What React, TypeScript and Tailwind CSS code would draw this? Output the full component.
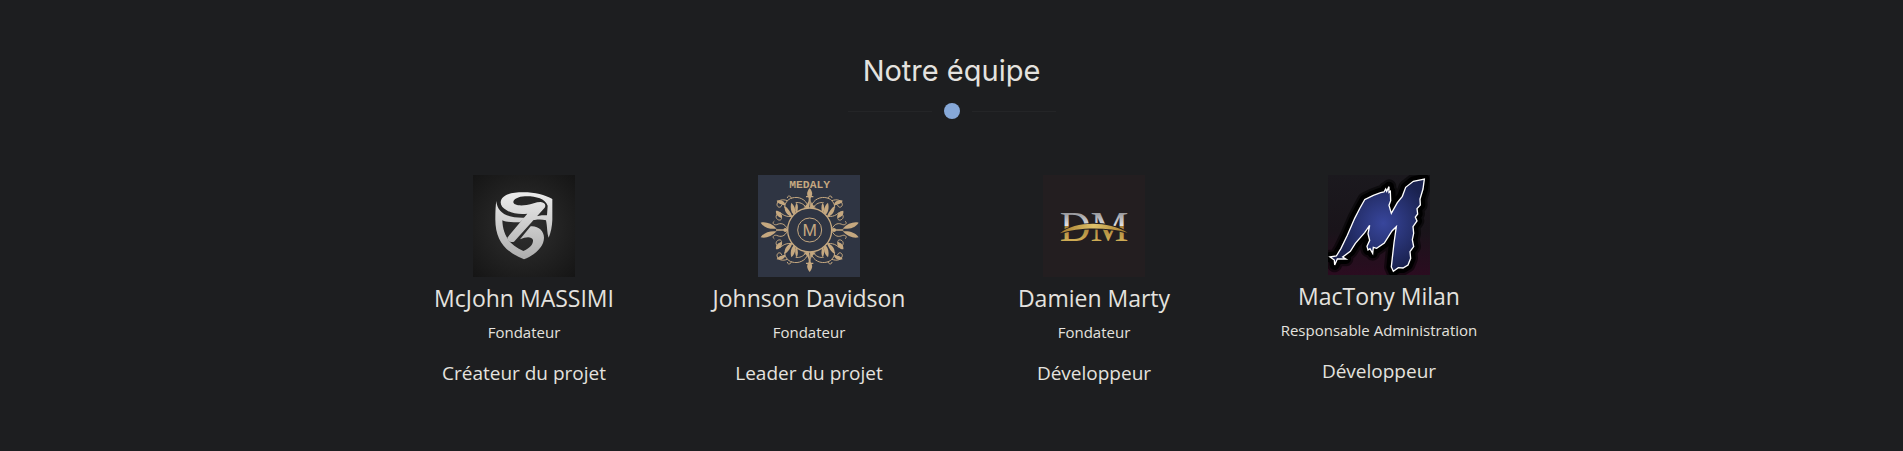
import React from "react";

const ShieldLogo = () => (
  <svg viewBox="24 15 306 306" className="h-[102px] w-[102px]" role="img" aria-label="McJohn MASSIMI">
    <defs>
      <radialGradient id="shield-bg" r="0.7">
        <stop offset="0" stopColor="#303030" />
        <stop offset="1" stopColor="#151515" />
      </radialGradient>
      <linearGradient id="steel" x1="0" y1="22" x2="0" y2="223" gradientUnits="userSpaceOnUse">
        <stop offset="0" stopColor="#ececec" />
        <stop offset="1" stopColor="#acacac" />
      </linearGradient>
    </defs>
    <rect x="24" y="15" width="306" height="306" fill="url(#shield-bg)" />
    <g fill="url(#steel)" transform="translate(15 45)">
      <path d="M92 52 C94 30 120 22 160 22 C195 22 225 30 247 42 L247 105 C246 125 243 142 236 158 C231 145 232 125 228 106 C212 102 195 104 180 108 L192 96 C205 91 220 90 231 91 L233 62 C225 40 195 33 165 34 C145 35 130 42 130 52 C132 61 150 63 170 60 C185 58 198 51 212 51 C224 52 229 60 224 68 L132 170 C124 174 113 168 112 158 L172 86 C150 88 125 86 110 76 C98 69 92 62 92 52 Z" />
      <path d="M79 48 C82 80 105 100 165 98 L150 112 C130 112 110 112 97 106 C98 145 115 180 160 198 C180 190 190 178 189 165 C185 154 168 155 150 163 L182 124 C205 122 222 138 222 158 C222 185 195 210 162 223 C105 200 75 165 76 100 C76 80 77 60 79 48 Z" />
    </g>
  </svg>
);

// One quarter of the flourish, mirrored around the medallion
const Flourish = () => (
  <g>
    <path
      d="M174 108 C168 88 146 78 126 84 C112 88 104 100 104 112 M168 112 C160 100 148 96 138 98 M112 92 C98 86 82 90 81 104 C82 114 94 114 95 106 M124 84 C122 76 112 76 112 83 M136 136 C118 144 100 138 92 128 M92 130 C76 128 74 146 86 150 C94 152 98 144 92 141 M112 176 C104 160 92 158 80 164 C70 166 66 158 72 154"
      fill="none"
      stroke="#c5a880"
      strokeWidth="3"
      strokeLinecap="round"
    />
    <path
      d="M80 92 C92 88 106 94 106 106 C96 104 84 102 80 92 Z M124 98 C136 108 138 124 136 138 C122 130 120 112 124 98 Z M140 98 C146 108 144 120 140 132 C134 120 134 108 140 98 Z M104 108 C114 114 122 126 128 142 C112 138 102 124 104 108 Z M32 158 C46 154 66 160 80 176 C62 178 42 174 32 158 Z M78 122 C90 122 98 132 96 144 C84 142 76 134 78 122 Z M177 84 C176 98 170 106 160 112 L178 116 Z"
      fill="#c5a880"
    />
  </g>
);

const MedalyLogo = () => (
  <svg viewBox="24 15 306 306" className="h-[102px] w-[102px]" role="img" aria-label="Johnson Davidson">
    <rect x="24" y="15" width="306" height="306" fill="#2f3543" />
    <text x="179" y="53" textAnchor="middle" fontFamily="Liberation Mono, monospace" fontWeight="700" fontSize="34" fill="#c5a880">
      MEDALY
    </text>
    <Flourish />
    <g transform="translate(358 0) scale(-1 1)">
      <Flourish />
    </g>
    <g transform="translate(0 360) scale(1 -1)">
      <Flourish />
    </g>
    <g transform="translate(358 360) scale(-1 -1)">
      <Flourish />
    </g>
    <g fill="#c5a880">
      <path d="M179 54 C188 65 189 74 182 84 L179 110 L176 84 C169 74 170 65 179 54 Z" />
      <path d="M179 306 C188 295 189 286 182 276 L179 250 L176 276 C169 286 170 295 179 306 Z" />
      <path d="M168 78 L190 78 L190 82 L168 82 Z M168 278 L190 278 L190 282 L168 282 Z" />
      <path d="M78 178 H114 V182 H78 Z M244 178 H280 V182 H244 Z" />
    </g>
    <circle cx="179" cy="180" r="66" fill="#2f3543" stroke="#c5a880" strokeWidth="4" />
    <circle cx="106" cy="180" r="6" fill="#c5a880" />
    <circle cx="252" cy="180" r="6" fill="#c5a880" />
    <circle cx="179" cy="180" r="36" fill="none" stroke="#c5a880" strokeWidth="3" />
    <text x="179" y="198" textAnchor="middle" fontFamily="Liberation Sans, sans-serif" fontSize="52" fill="#c5a880">
      M
    </text>
  </svg>
);

const DMLogo = () => (
  <svg viewBox="24 15 306 306" className="h-[102px] w-[102px]" role="img" aria-label="Damien Marty">
    <defs>
      <linearGradient id="dm-letters" x1="0" y1="122" x2="0" y2="213" gradientUnits="userSpaceOnUse">
        <stop offset="0" stopColor="#8b8c90" />
        <stop offset="0.5" stopColor="#e2e2e4" />
        <stop offset="0.52" stopColor="#a9843a" />
        <stop offset="1" stopColor="#d0ad55" />
      </linearGradient>
      <linearGradient id="dm-arc">
        <stop offset="0" stopColor="#a57b2b" />
        <stop offset="0.5" stopColor="#dfc26c" />
        <stop offset="1" stopColor="#a57b2b" />
      </linearGradient>
    </defs>
    <rect x="24" y="15" width="306" height="306" fill="#231e20" />
    <text x="177" y="212" textAnchor="middle" fontFamily="Liberation Serif, serif" fontSize="128" fill="url(#dm-letters)">
      DM
    </text>
    <path
      d="M75 190 C121 153 218 152 278 188 C218 171 129 171 75 190 Z"
      fill="url(#dm-arc)"
      stroke="#231e20"
      strokeWidth="6"
      paintOrder="stroke"
    />
  </svg>
);

const BrushLogo = () => (
  <svg viewBox="24 15 306 300" className="h-[100px] w-[102px]" role="img" aria-label="MacTony Milan">
    <defs>
      <linearGradient id="brush-bg" x1="0" y1="0" x2="0" y2="1">
        <stop offset="0" stopColor="#1b191e" />
        <stop offset="0.55" stopColor="#19141a" />
        <stop offset="1" stopColor="#2b0c20" />
      </linearGradient>
      <radialGradient id="brush-fill" cx="190" cy="160" r="140" gradientUnits="userSpaceOnUse">
        <stop offset="0" stopColor="#38469c" />
        <stop offset="1" stopColor="#1a2250" />
      </radialGradient>
      <path
        id="brush-m"
        d="M134 89 L160 76 L182 68 L192 66 L197 57 L200 64 L207 50 L207 67 L211 64 L212 92 L207 106 L214 130 L232 98 L247 79 L257 52 L280 34 L313 27 L309 57 L300 87 L301 105 L291 116 L293 132 L286 141 L291 153 L279 170 L281 190 L277 209 L281 230 L270 245 L272 265 L264 285 L249 294 L235 293 L220 304 L214 291 L217 263 L222 219 L229 170 L216 183 L193 219 L170 235 L160 232 L158 250 L150 236 L144 240 L141 229 L149 211 L144 191 L149 166 L134 188 L106 220 L91 244 L68 261 L78 267 L52 267 L44 285 L43 270 L30 261 L49 258 L63 235 L82 196 L104 145 L120 114 Z"
      />
    </defs>
    <rect x="24" y="15" width="306" height="300" fill="url(#brush-bg)" />
    <use href="#brush-m" fill="#000" stroke="#000" strokeOpacity="0.5" strokeWidth="44" strokeLinejoin="round" />
    <use href="#brush-m" fill="#000" stroke="#000" strokeWidth="30" strokeLinejoin="round" />
    <use href="#brush-m" fill="url(#brush-fill)" stroke="#fff" strokeWidth="4" />
  </svg>
);

const team = [
  { name: "McJohn MASSIMI", title: "Fondateur", job: "Créateur du projet", Logo: ShieldLogo },
  { name: "Johnson Davidson", title: "Fondateur", job: "Leader du projet", Logo: MedalyLogo },
  { name: "Damien Marty", title: "Fondateur", job: "Développeur", Logo: DMLogo },
  { name: "MacTony Milan", title: "Responsable Administration", job: "Développeur", Logo: BrushLogo },
];

export default function App() {
  return (
    <section
      id="team"
      className="min-h-screen w-full bg-[#1d1e20] px-4 pt-[47px] pb-12 text-center font-['Open_Sans',sans-serif] text-[#e4e2df]"
    >
      <h2 className="font-[Inter,sans-serif] text-[29px] leading-[48px]">Notre équipe</h2>
      <div className="mt-2 flex items-center justify-center gap-3">
        <span className="h-px w-[84px] bg-[#242527]" />
        <span className="h-4 w-4 rounded-full bg-[#86a8d8]" />
        <span className="h-px w-[84px] bg-[#242527]" />
      </div>
      <div className="mx-auto mt-14 grid max-w-[1140px] grid-cols-1 sm:grid-cols-2 lg:grid-cols-4">
        {team.map(({ name, title, job, Logo }) => (
          <div key={name} className="flex flex-col items-center">
            <Logo />
            <h4 className="mt-[5px] text-[23px] leading-8">{name}</h4>
            <p className="mt-1 text-[15px] leading-7">{title}</p>
            <h5 className="mt-[13px] text-[19px] leading-7">{job}</h5>
          </div>
        ))}
      </div>
    </section>
  );
}
